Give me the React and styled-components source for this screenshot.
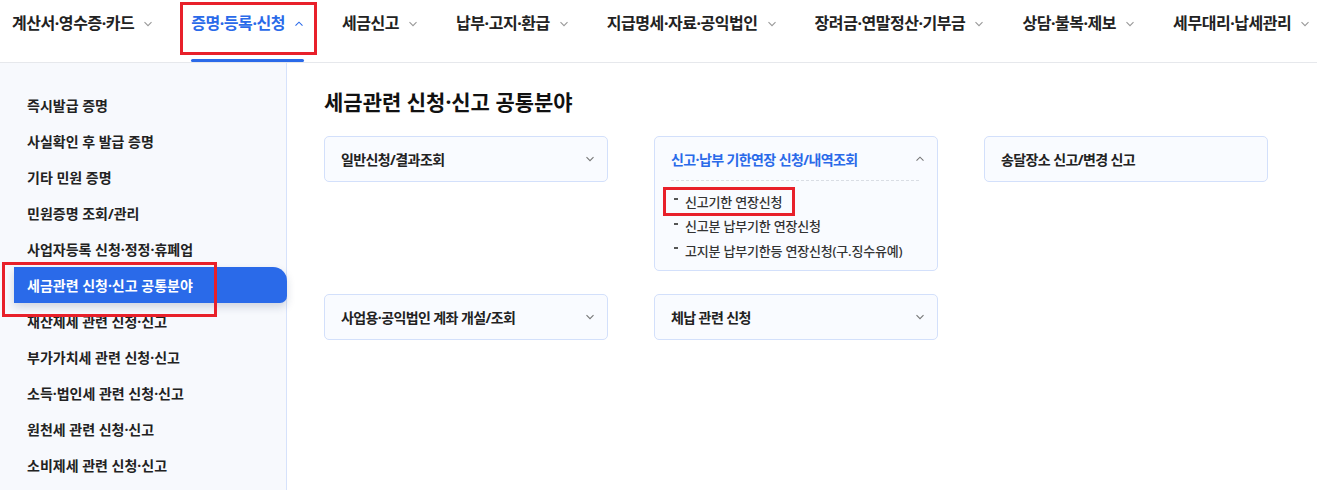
import React from "react";
import styled, { createGlobalStyle } from "styled-components";

const Global = createGlobalStyle`
  html, body { margin: 0; padding: 0; background: #fff; }
  body {
    font-family: "Noto Sans", "Noto Sans CJK KR", sans-serif;
    color: #222;
    -webkit-font-smoothing: antialiased;
  }
  * { box-sizing: border-box; }
`;

const Page = styled.div`
  width: 1317px;
  height: 490px;
  overflow: hidden;
  position: relative;
  display: flex;
  flex-direction: column;
`;

const Header = styled.header`
  height: 63px;
  border-bottom: 1px solid #e6e8ec;
  display: flex;
  padding-left: 12px;
  gap: 38px;
  flex-shrink: 0;
`;

const NavItem = styled.div`
  height: 62px;
  display: flex;
  align-items: flex-start;
  padding-top: 11px;
  gap: 9px;
  position: relative;
  font-size: 16px;
  font-weight: 700;
  letter-spacing: -0.45px;
  color: ${(p) => (p.$active ? "#2a6ae9" : "#222")};
  white-space: nowrap;
  &::after {
    content: "";
    position: absolute;
    left: 0;
    right: 0;
    bottom: 0;
    height: 3px;
    border-radius: 2px;
    background: ${(p) => (p.$active ? "#2a6ae9" : "transparent")};
  }
`;

const NavLabel = styled.span`
  line-height: 24px;
`;

const Chevron = styled.svg`
  width: 10px;
  height: 10px;
  margin-top: 8px;
  flex-shrink: 0;
`;

const Body = styled.div`
  flex: 1;
  display: flex;
  min-height: 0;
`;

const Sidebar = styled.nav`
  width: 287px;
  background: #f7f9fd;
  border-right: 1px solid #d6e2fb;
  padding-top: 24px;
  display: flex;
  flex-direction: column;
  flex-shrink: 0;
`;

const SideItem = styled.div`
  height: 36px;
  display: flex;
  align-items: center;
  font-size: 14px;
  font-weight: 700;
  letter-spacing: 0;
  white-space: nowrap;
  margin-left: ${(p) => (p.$active ? "14px" : "0")};
  margin-right: -1px;
  padding-left: ${(p) => (p.$active ? "13px" : "27px")};
  color: ${(p) => (p.$active ? "#fff" : "#222")};
  background: ${(p) => (p.$active ? "#2a6ae9" : "transparent")};
  border-radius: 0 14px 7px 0;
  box-shadow: ${(p) => (p.$active ? "0 4px 8px rgba(30, 50, 90, 0.18)" : "none")};
  position: relative;
  z-index: ${(p) => (p.$active ? 1 : 0)};
`;

const Main = styled.main`
  flex: 1;
  padding: 25px 0 0 37px;
`;

const Title = styled.h2`
  margin: 0 0 20px;
  font-size: 21px;
  font-weight: 700;
  letter-spacing: 0;
  color: #111;
  line-height: 28px;
`;

const Grid = styled.div`
  display: grid;
  grid-template-columns: repeat(3, 284px);
  column-gap: 46px;
  row-gap: 23px;
  align-items: start;
`;

const Card = styled.div`
  background: #f9fbff;
  border: 1px solid #d3e0fb;
  border-radius: 5px;
  padding: 0 16px;
`;

const CardHead = styled.div`
  height: 44px;
  display: flex;
  align-items: center;
  justify-content: space-between;
  font-size: 14px;
  font-weight: 700;
  letter-spacing: -0.6px;
  color: ${(p) => (p.$open ? "#2a6ae9" : "#222")};
  border-bottom: ${(p) => (p.$open ? "1px dashed #d9dde4" : "none")};
  margin-right: ${(p) => (p.$open ? "2px" : "0")};
`;

const CardChevron = styled.svg`
  width: 10px;
  height: 10px;
  margin-right: ${(p) => (p.$open ? "-6px" : "-4px")};
`;

const SubList = styled.ul`
  list-style: none;
  margin: 0;
  padding: 8px 0 7px 3px;
`;

const SubItem = styled.li`
  height: 24.5px;
  display: flex;
  align-items: center;
  gap: 7px;
  font-size: 13px;
  font-weight: 500;
  letter-spacing: -0.2px;
  color: #333;
  white-space: nowrap;
  &::before {
    content: "";
    width: 4px;
    height: 2px;
    background: #555;
    margin-top: -4px;
  }
`;

const Mark = styled.div`
  position: absolute;
  border: 3px solid #e8202a;
  left: ${(p) => p.$x}px;
  top: ${(p) => p.$y}px;
  width: ${(p) => p.$w}px;
  height: ${(p) => p.$h}px;
  pointer-events: none;
  z-index: 5;
`;

const NavChevron = ({ up, color }) => (
  <Chevron viewBox="0 0 10 10">
    <path
      d={up ? "M1.5 6.7 L5 3.2 L8.5 6.7" : "M1.5 3.2 L5 6.7 L8.5 3.2"}
      fill="none"
      stroke={color}
      strokeWidth="1.1"
    />
  </Chevron>
);

const navItems = [
  "계산서·영수증·카드",
  "증명·등록·신청",
  "세금신고",
  "납부·고지·환급",
  "지급명세·자료·공익법인",
  "장려금·연말정산·기부금",
  "상담·불복·제보",
  "세무대리·납세관리",
];

const sideItems = [
  "즉시발급 증명",
  "사실확인 후 발급 증명",
  "기타 민원 증명",
  "민원증명 조회/관리",
  "사업자등록 신청·정정·휴폐업",
  "세금관련 신청·신고 공통분야",
  "재산제세 관련 신청·신고",
  "부가가치세 관련 신청·신고",
  "소득·법인세 관련 신청·신고",
  "원천세 관련 신청·신고",
  "소비제세 관련 신청·신고",
];

const CardBox = ({ title, open, noChevron, children }) => (
  <Card>
    <CardHead $open={open}>
      <span>{title}</span>
      {!noChevron && (
        <CardChevron $open={open} viewBox="0 0 10 10">
          <path
            d={open ? "M1.5 6.7 L5 3.2 L8.5 6.7" : "M1.5 3.2 L5 6.7 L8.5 3.2"}
            fill="none"
            stroke="#777"
            strokeWidth="1.1"
          />
        </CardChevron>
      )}
    </CardHead>
    {children}
  </Card>
);

export default function App() {
  return (
    <>
      <Global />
      <Page>
        <Header>
          {navItems.map((t, i) => (
            <NavItem key={t} $active={i === 1}>
              <NavLabel>{t}</NavLabel>
              <NavChevron up={i === 1} color={i === 1 ? "#2a6ae9" : "#999"} />
            </NavItem>
          ))}
        </Header>
        <Body>
          <Sidebar>
            {sideItems.map((t, i) => (
              <SideItem key={t} $active={i === 5}>
                {t}
              </SideItem>
            ))}
          </Sidebar>
          <Main>
            <Title>세금관련 신청·신고 공통분야</Title>
            <Grid>
              <CardBox title="일반신청/결과조회" />
              <CardBox title="신고·납부 기한연장 신청/내역조회" open>
                <SubList>
                  <SubItem>신고기한 연장신청</SubItem>
                  <SubItem>신고분 납부기한 연장신청</SubItem>
                  <SubItem>고지분 납부기한등 연장신청(구.징수유예)</SubItem>
                </SubList>
              </CardBox>
              <CardBox title="송달장소 신고/변경 신고" noChevron />
              <CardBox title="사업용·공익법인 계좌 개설/조회" />
              <CardBox title="체납 관련 신청" />
            </Grid>
          </Main>
        </Body>
        <Mark $x={180} $y={2} $w={137} $h={53} />
        <Mark $x={2} $y={262} $w={215} $h={55} />
        <Mark $x={663} $y={187} $w={132} $h={29} />
      </Page>
    </>
  );
}
